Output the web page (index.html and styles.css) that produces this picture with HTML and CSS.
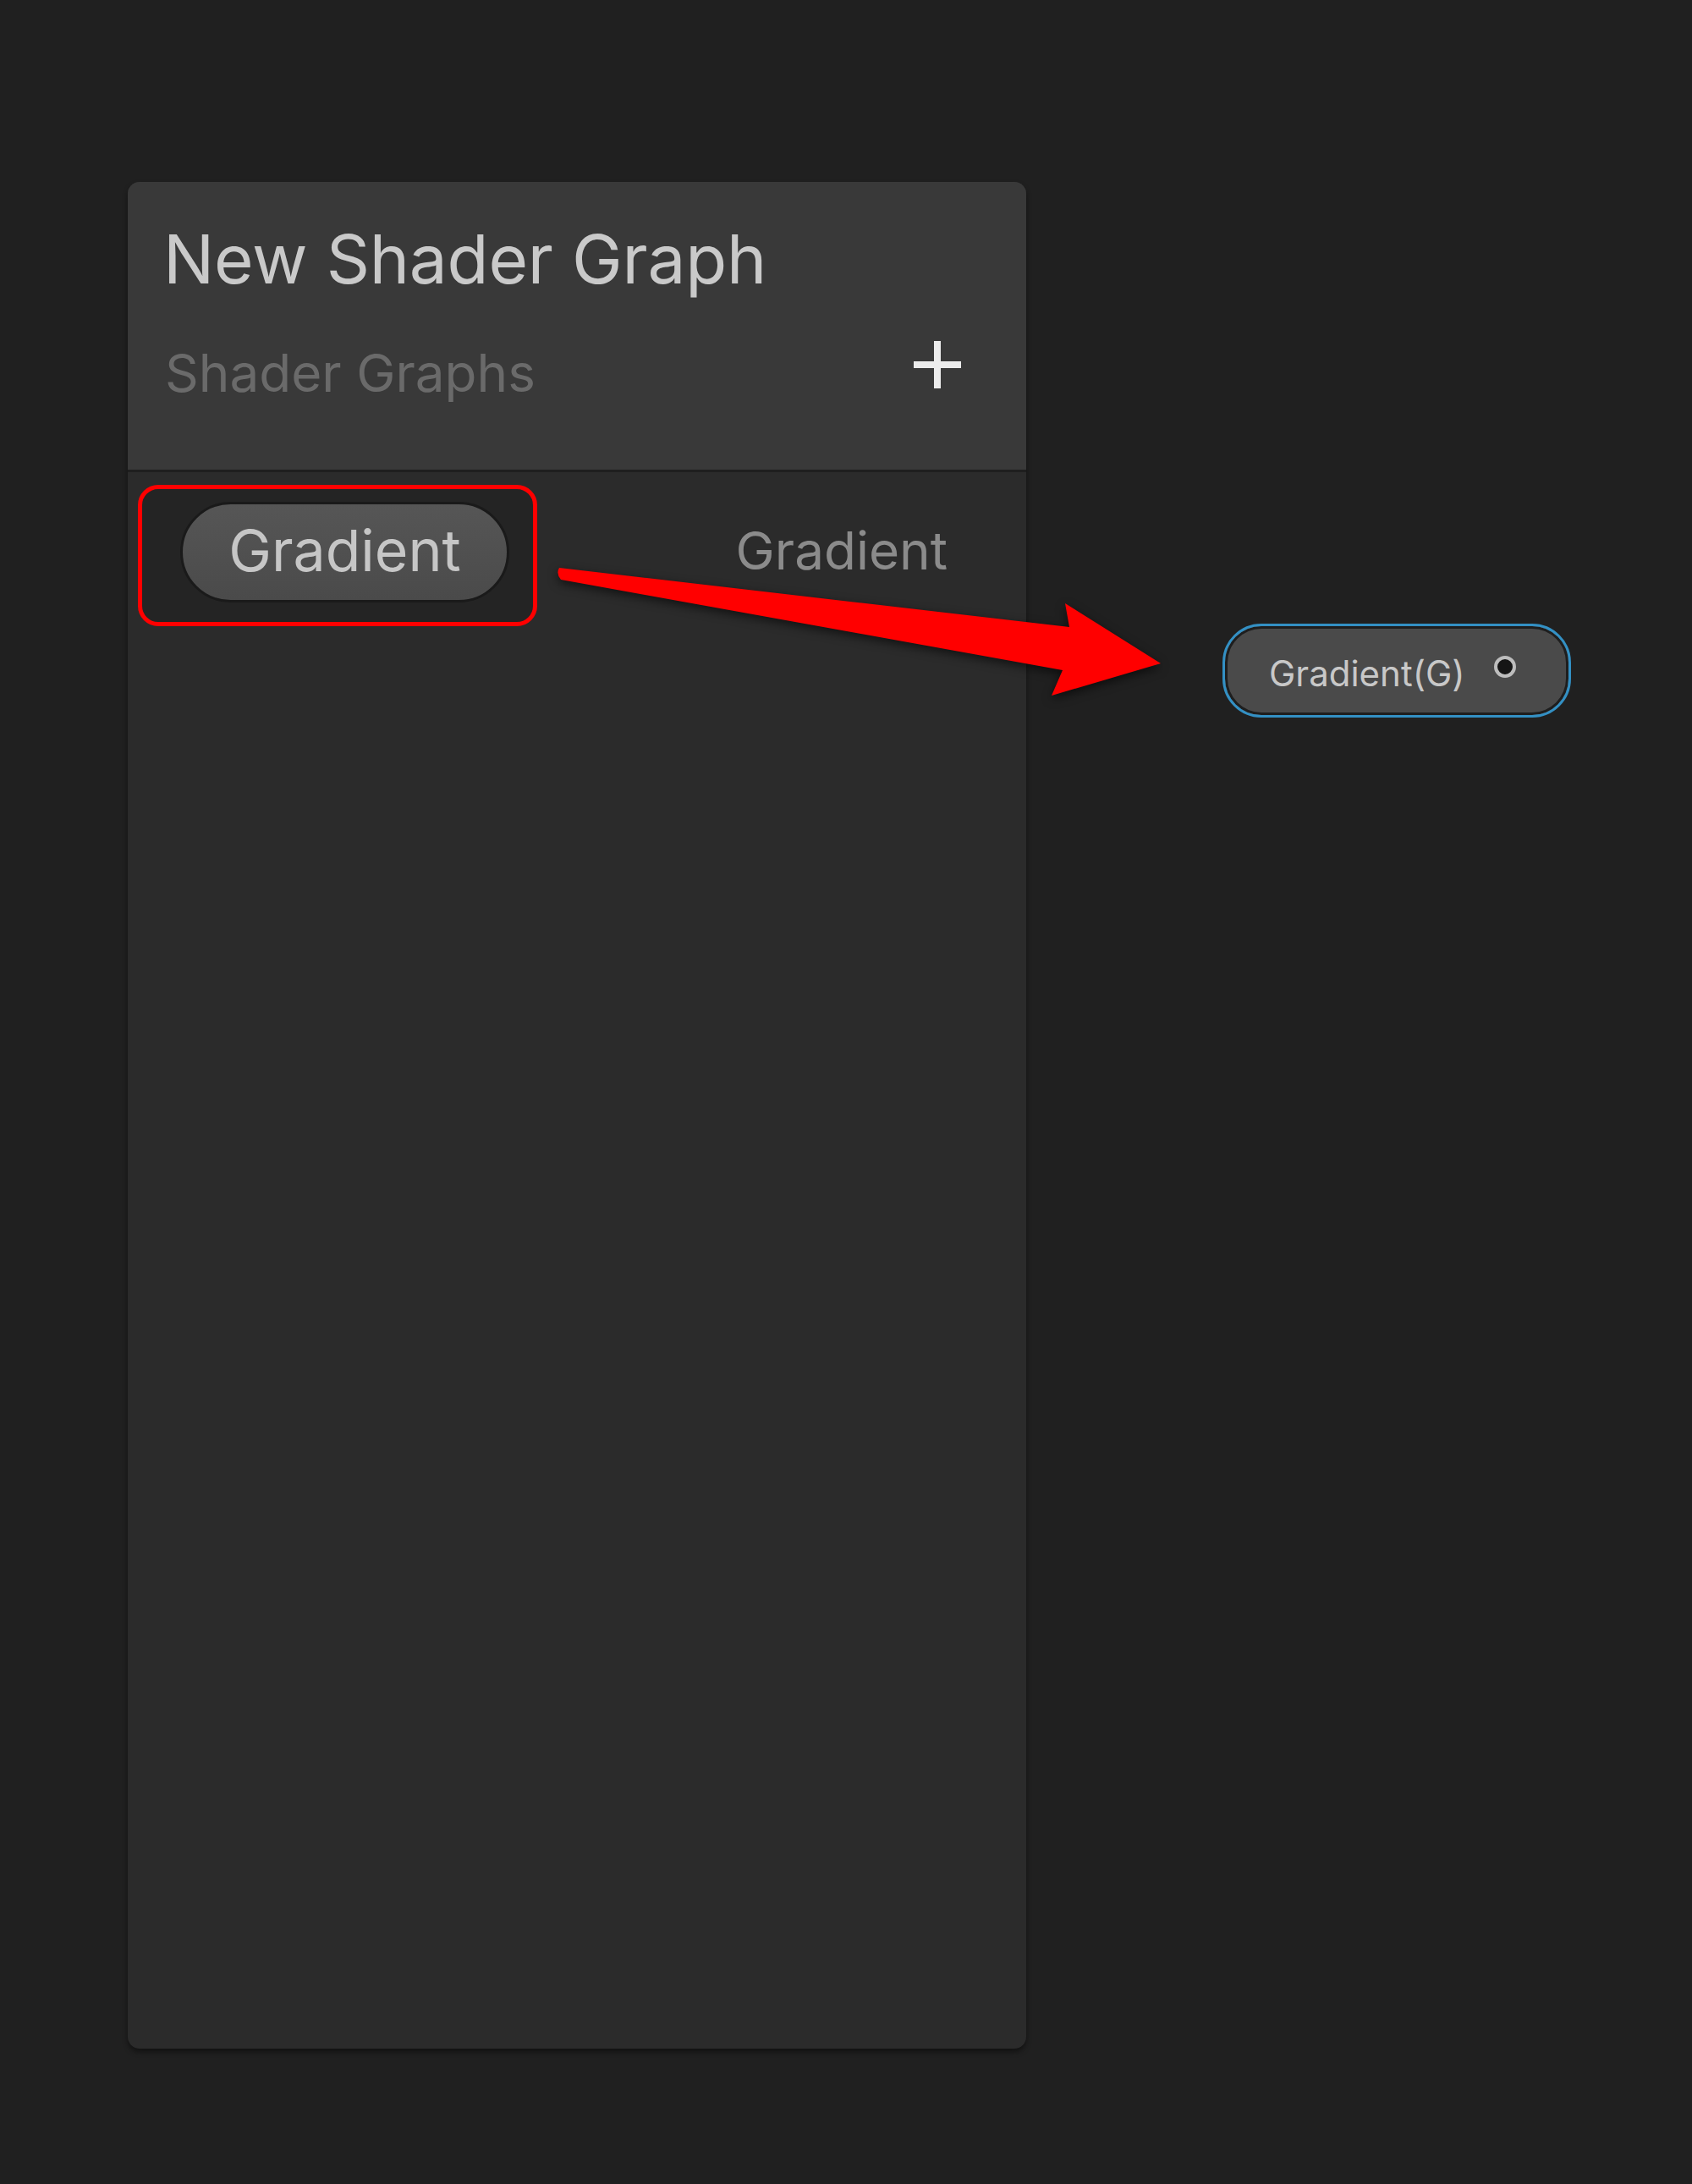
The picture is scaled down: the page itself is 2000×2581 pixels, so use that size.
FILE: index.html
```html
<!DOCTYPE html>
<html lang="en">
<head>
<meta charset="utf-8">
<title>New Shader Graph</title>
<link rel="stylesheet" href="styles.css">
</head>
<body>
<div class="canvas">
  <section class="blackboard">
    <header class="bb-header">
      <h1 class="bb-title">New Shader Graph</h1>
      <div class="bb-sub-row">
        <span class="bb-subtitle">Shader Graphs</span>
        <svg class="bb-add" width="56" height="56" viewBox="0 0 56 56" aria-label="Add">
          <rect x="24" y="0" width="8" height="56" fill="#ececec"/>
          <rect x="0" y="24" width="56" height="8" fill="#ececec"/>
        </svg>
      </div>
    </header>
    <div class="bb-body">
      <div class="bb-row">
        <div class="highlight">
          <span class="pill">Gradient</span>
        </div>
        <span class="type-label">Gradient</span>
      </div>
    </div>
  </section>

  <svg class="arrow" width="2000" height="2581" viewBox="0 0 2000 2581">
    <path d="M661,671 L1264,741 L1259,713 L1372,784 L1243,822 L1256,792 L663,685 Q657,678 661,671 Z" fill="#ff0000"/>
  </svg>

  <div class="node">
    <span class="node-label">Gradient(G)</span>
    <span class="port"></span>
  </div>
</div>
</body>
</html>
```

FILE: styles.css
```css
html, body {
  margin: 0;
  padding: 0;
  background: #202020;
}

body {
  width: 2000px;
  height: 2581px;
  font-family: "Inter", "Roboto", "Liberation Sans", sans-serif;
  overflow: hidden;
}

.canvas {
  position: relative;
  width: 2000px;
  height: 2581px;
  padding-top: 215px;
  padding-left: 151px;
  box-sizing: border-box;
}

.blackboard {
  width: 1062px;
  height: 2206px;
  background: #2b2b2b;
  border-radius: 14px;
  box-shadow: 0 4px 6px rgba(0, 0, 0, 0.45);
  overflow: hidden;
  display: flex;
  flex-direction: column;
}

.bb-header {
  background: #393939;
  height: 343px;
  box-sizing: border-box;
  padding: 51px 77px 0 42px;
  border-bottom: 3px solid #1f1f1f;
  flex: none;
}

.bb-title {
  margin: 0;
  font-size: 80px;
  line-height: 80px;
  font-weight: 400;
  color: #c9c9c9;
  letter-spacing: -0.2px;
}

.bb-sub-row {
  display: flex;
  justify-content: space-between;
  align-items: flex-start;
  margin-top: 64px;
}

.bb-subtitle {
  font-size: 62px;
  line-height: 62px;
  color: #6a6a6a;
  padding-left: 2px;
}

.bb-add {
  display: block;
  margin-top: -7px;
}

.bb-body {
  flex: 1;
}

.bb-row {
  display: flex;
  align-items: center;
  justify-content: space-between;
  padding: 15px 93px 0 12px;
}

.highlight {
  width: 472px;
  height: 167px;
  box-sizing: border-box;
  border: 5px solid #ff0000;
  border-radius: 24px;
  background: #242424;
  padding: 15px 0 0 45px;
}

.pill {
  display: flex;
  align-items: center;
  justify-content: center;
  width: 389px;
  height: 119px;
  box-sizing: border-box;
  border: 3px solid #1a1a1a;
  border-radius: 60px;
  background: linear-gradient(#565656, #4a4a4a);
  font-size: 68px;
  line-height: 68px;
  color: #c6c6c6;
  padding-bottom: 6px;
}

.type-label {
  font-size: 62px;
  line-height: 62px;
  color: #8b8b8b;
  margin-top: -12px;
}

.arrow {
  position: absolute;
  left: 0;
  top: 0;
  pointer-events: none;
  filter: drop-shadow(0 4px 6px rgba(0, 0, 0, 0.6));
}

.node {
  position: absolute;
  left: 1445px;
  top: 737px;
  width: 412px;
  height: 111px;
  box-sizing: border-box;
  border: 3px solid #3390c4;
  border-radius: 46px;
  background: #4a4a4a;
  box-shadow: inset 0 0 0 3px #1e1e1e;
  display: flex;
  align-items: center;
  padding: 0 0 0 52px;
}

.node-label {
  font-size: 42px;
  line-height: 42px;
  color: #c8c8c8;
  margin-top: 6px;
}

.port {
  width: 18px;
  height: 18px;
  border-radius: 50%;
  background: #151515;
  border: 4px solid #bdbdbd;
  margin-left: 34px;
  margin-top: -10px;
}
```
